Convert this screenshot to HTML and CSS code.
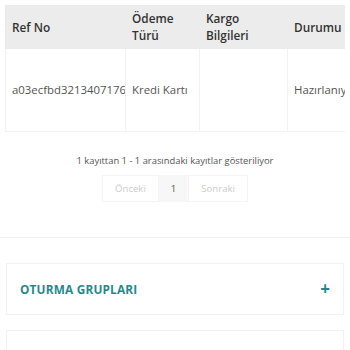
FILE: index.html
```html
<!DOCTYPE html>
<html lang="tr">
<head>
    <meta charset="UTF-8">
    <meta name="viewport" content="width=device-width, initial-scale=1.0">
    <title>Siparişler</title>
    <link rel="stylesheet" href="styles.css">
</head>
<body>

<div class="orders">
    <div class="table-wrap">
        <table class="orders-table">
            <thead>
                <tr>
                    <th class="col-ref">Ref No</th>
                    <th class="col-pay">Ödeme Türü</th>
                    <th class="col-cargo">Kargo Bilgileri</th>
                    <th class="col-status">Durumu</th>
                    <th class="col-extra">Tutar</th>
                </tr>
            </thead>
            <tbody>
                <tr>
                    <td>a03ecfbd3213407176</td>
                    <td>Kredi Kartı</td>
                    <td></td>
                    <td>Hazırlanıyor</td>
                    <td>1.250,00 TL</td>
                </tr>
            </tbody>
        </table>
    </div>

    <div class="table-info">1 kayıttan 1 - 1 arasındaki kayıtlar gösteriliyor</div>

    <div class="pager">
        <span class="pager-btn disabled">Önceki</span>
        <span class="pager-btn current">1</span>
        <span class="pager-btn disabled">Sonraki</span>
    </div>
</div>

<div class="accordion">
    <div class="acc-item">
        <span class="acc-title">OTURMA GRUPLARI</span>
        <span class="acc-plus">+</span>
    </div>
    <div class="acc-item"></div>
</div>

</body>
</html>
```

FILE: styles.css
```css
body {
    margin: 0;
    background-color: #fff;
    font-family: "Open Sans", Arial, sans-serif;
    color: #555;
}

.orders {
    padding: 5px 5px 35px;
    border-bottom: 1px solid #eee;
}

.table-wrap {
    overflow: hidden;
}

.orders-table {
    border-collapse: collapse;
    table-layout: fixed;
    width: 460px;
}

.orders-table th,
.orders-table td {
    box-sizing: border-box;
    padding: 0 6px;
}

.orders-table th {
    background-color: #ececec;
    color: #333;
    font-size: 11.8px;
    font-weight: 600;
    text-align: left;
    height: 44px;
    line-height: 17px;
    border-left: 1px solid #ececec;
}

.orders-table td {
    height: 82px;
    font-size: 11.4px;
    border-left: 1px solid #f2f2f2;
    border-bottom: 1px solid #f2f2f2;
    white-space: nowrap;
    overflow: hidden;
}

.col-ref { width: 120px; }
.col-pay { width: 74px; }
.col-cargo { width: 88px; }
.col-status { width: 96px; }

.table-info {
    text-align: center;
    font-size: 9.4px;
    margin-top: 22px;
}

.pager {
    display: flex;
    justify-content: center;
    margin-top: 8px;
}

.pager-btn {
    font-size: 9.6px;
    height: 25px;
    line-height: 25px;
    padding: 0 12px;
    border: 1px solid #f4f4f4;
    color: #ccc;
}

.pager-btn.current {
    background-color: #f7f7f7;
    color: #555;
    padding: 0 11px;
    border-color: #f7f7f7;
}

.accordion {
    padding: 25px 6px 0;
}

.acc-item {
    display: flex;
    justify-content: space-between;
    align-items: center;
    height: 50px;
    padding: 0 13px 0 13px;
    border: 1px solid #f2f2f2;
    margin-bottom: 15px;
}

.acc-title {
    color: #1f8a8c;
    font-weight: 700;
    font-size: 11.8px;
    letter-spacing: 0.2px;
}

.acc-plus {
    color: #1f8a8c;
    font-weight: 700;
    font-size: 17px;
}
```
